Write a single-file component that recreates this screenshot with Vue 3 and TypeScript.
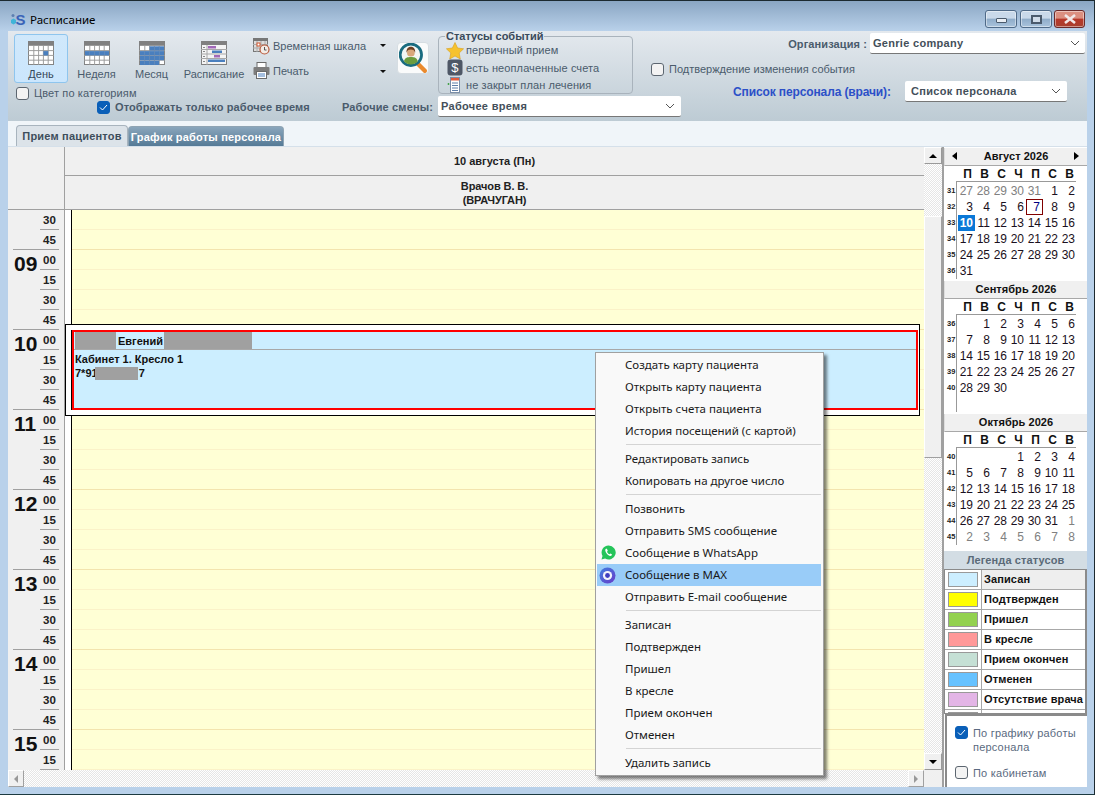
<script setup lang="ts">
interface Day { t: string; muted?: boolean; today?: boolean; picked?: boolean }
interface Week { num: number; days: Day[] }
interface Month { title: string; nav: boolean; weeks: Week[] }

function makeMonth(title: string, nav: boolean, firstWeek: number, lead: (number | null)[], count: number, trail: number): Month {
  const cells: Day[] = []
  lead.forEach((v) => cells.push({ t: v === null ? '' : String(v), muted: v !== null }))
  for (let d = 1; d <= count; d++) {
    const isAug = title.startsWith('Август')
    cells.push({ t: String(d), today: isAug && d === 10, picked: isAug && d === 7 })
  }
  for (let d = 1; d <= trail; d++) cells.push({ t: String(d), muted: true })
  const weeks: Week[] = []
  for (let i = 0; i < cells.length; i += 7) {
    weeks.push({ num: firstWeek + weeks.length, days: cells.slice(i, i + 7) })
  }
  return { title, nav, weeks }
}

const months: Month[] = [
  makeMonth('Август 2026', true, 31, [27, 28, 29, 30, 31], 31, 0),
  makeMonth('Сентябрь 2026', false, 36, [null], 30, 0),
  makeMonth('Октябрь 2026', false, 40, [null, null, null], 31, 8),
]
const dow = ['П', 'В', 'С', 'Ч', 'П', 'С', 'В']

const hourGroups = [
  { h: '', m: ['30', '45'], open: false },
  ...['09', '10', '11', '12', '13', '14'].map((h) => ({ h, m: ['00', '15', '30', '45'], open: false })),
  { h: '15', m: ['00', '15'], open: true },
]
const slots = Array.from({ length: 28 }, (_, i) => i)

const legend = [
  { t: 'Записан', c: 'c-a', first: true },
  { t: 'Подтвержден', c: 'c-b' },
  { t: 'Пришел', c: 'c-c' },
  { t: 'В кресле', c: 'c-d' },
  { t: 'Прием окончен', c: 'c-e' },
  { t: 'Отменен', c: 'c-f' },
  { t: 'Отсутствие врача', c: 'c-g' },
  { t: '', c: 'c-h' },
]

const menu: string[][] = [
  ['Создать карту пациента', 'Открыть карту пациента', 'Открыть счета пациента', 'История посещений (с картой)'],
  ['Редактировать запись', 'Копировать на другое число'],
  ['Позвонить', 'Отправить SMS сообщение', 'Сообщение в WhatsApp', 'Сообщение в MAX', 'Отправить E-mail сообщение'],
  ['Записан', 'Подтвержден', 'Пришел', 'В кресле', 'Прием окончен', 'Отменен'],
  ['Удалить запись'],
]

const colX = [1, 6, 11, 16, 21, 26]
const rowY = [5, 10, 15, 20, 25]
const views = [
  { label: 'День', blue: [[3, 1]] as number[][], active: true },
  { label: 'Неделя', blue: [[0, 1], [1, 1], [2, 1], [3, 1], [4, 1]] as number[][], active: false },
  {
    label: 'Месяц',
    blue: [[2, 0], [3, 0], [4, 0], [0, 1], [1, 1], [2, 1], [3, 1], [4, 1], [0, 2], [1, 2], [2, 2], [3, 2], [4, 2], [0, 3], [1, 3], [2, 3], [3, 3]] as number[][],
    active: false,
  },
]
</script>

<template>
  <div class="win">
    <header class="title">
      <svg class="logo" width="17" height="14" viewBox="0 0 17 14">
        <path d="M1 8l2.500-1.500 2.500 1.500v3l-2.500 1.500-2.500-1.500z" fill="#3fb4d8" />
        <circle cx="3" cy="3.500" r="1.500" fill="#5d7fb0" />
        <text x="5.500" y="12.500" class="logo-s">S</text>
      </svg>
      <span class="title-text">Расписание</span>
      <div class="ctrls">
        <span class="ctrl ctrl-min"><i></i></span>
        <span class="ctrl ctrl-max"><i></i></span>
        <span class="ctrl ctrl-close">
          <svg width="14" height="10" viewBox="0 0 14 10"><path d="M2 1l10 8M12 1L2 9" stroke="#f1e8e8" stroke-width="2.600" /></svg>
        </span>
      </div>
    </header>

    <section class="toolbar">
      <div class="tb-left">
        <div class="tb-row1">
          <button v-for="v in views" :key="v.label" class="vbtn" :class="{ active: v.active }">
            <svg width="26" height="24" viewBox="0 0 27 25">
              <rect x="0.500" y="0.500" width="26" height="24" fill="#fff" stroke="#808080" />
              <rect width="27" height="5" fill="#808080" />
              <path d="M6 5v20M11 5v20M16 5v20M21 5v20M0 10h27M0 15h27M0 20h27" stroke="#9a9a9a" stroke-width="1" />
              <rect v-for="(b, i) in v.blue" :key="i" :x="colX[b[0]]" :y="rowY[b[1]] + 0.500" width="5" height="4.500" fill="#4a7fbe" />
            </svg>
            <span>{{ v.label }}</span>
          </button>
          <button class="vbtn vbtn-wide">
            <svg width="26" height="24" viewBox="0 0 26 24">
              <rect x="0.500" y="0.500" width="25" height="23" fill="#f4f4f4" stroke="#808080" />
              <rect width="26" height="4" fill="#808080" />
              <path d="M6 4v20M0 8.500h26M0 13h26M0 17.500h26" stroke="#a8a8a8" />
              <rect x="2" y="6" width="2" height="1" fill="#888" /><rect x="2" y="10" width="2" height="1" fill="#888" />
              <rect x="2" y="15" width="2" height="1" fill="#888" /><rect x="2" y="20" width="2" height="1" fill="#888" />
              <rect x="7" y="5" width="8" height="2.500" fill="#a268b8" />
              <rect x="11" y="9.500" width="10" height="2.500" fill="#4a7fbe" />
              <rect x="13" y="14" width="6" height="2.500" fill="#a268b8" />
              <rect x="7" y="18.500" width="17" height="2.500" fill="#4a7fbe" />
            </svg>
            <span>Расписание</span>
          </button>
          <div class="tools">
            <div class="tool">
              <svg width="17" height="17" viewBox="0 0 17 17">
                <rect x="0.500" y="0.500" width="14" height="13" fill="#ddd" stroke="#777" />
                <rect width="15" height="3" fill="#777" />
                <path d="M4 3v11M8 3v11M12 3v11M0 6.500h15M0 10h15" stroke="#aaa" />
                <rect x="4" y="5" width="3" height="3" fill="#fff" stroke="#d0562f" />
                <circle cx="11.500" cy="11.500" r="4.500" fill="#f3ece6" stroke="#b9583a" stroke-width="1.200" />
                <path d="M11.500 9v3h2" stroke="#555" fill="none" />
              </svg>
              <span class="tool-text">Временная шкала</span>
              <i class="tri"></i>
            </div>
            <div class="tool tool2">
              <svg width="17" height="17" viewBox="0 0 17 17">
                <rect x="4" y="0.500" width="9" height="5" fill="#fff" stroke="#6a6a6a" />
                <rect x="0.500" y="5" width="16" height="8" rx="1" fill="#7d7d7d" />
                <rect x="3.500" y="9.500" width="10" height="7" fill="#fff" stroke="#6a6a6a" />
                <path d="M5 12h7M5 14h7" stroke="#4a7fbe" />
              </svg>
              <span class="tool-text">Печать</span>
              <i class="tri tri2"></i>
            </div>
          </div>
          <div class="search">
            <svg width="28" height="30" viewBox="0 0 26 28">
              <path d="M17 19l7 7" stroke="#ea8a2d" stroke-width="4" stroke-linecap="round" />
              <circle cx="11" cy="11" r="10" fill="#f3f7f5" stroke="#1a6c80" stroke-width="2.600" />
              <path d="M4.500 17c1-3.500 3.500-4 6.500-4s5.500.5 6.500 4c-2 2-4 3-6.500 3s-4.500-1-6.500-3z" fill="#6b9c3d" />
              <circle cx="11" cy="9" r="3.600" fill="#d9a87c" />
              <path d="M7 9c-.5-4 2-5.500 4-5.500s4.500 1.500 4 5.500c-1-2.500-2-3-4-3s-3 .5-4 3z" fill="#6e3f22" />
            </svg>
          </div>
        </div>
        <div class="tb-row2">
          <span class="cb"></span>
          <span class="lab">Цвет по категориям</span>
        </div>
        <div class="tb-row3">
          <span class="cb on"><svg width="9" height="7" viewBox="0 0 9 7"><path d="M1 3.500l2.500 2.500L8 1" stroke="#fff" fill="none" /></svg></span>
          <span class="lab-b only">Отображать только рабочее время</span>
          <span class="lab-b shifts">Рабочие смены:</span>
        </div>
      </div>

      <div class="tb-mid">
        <fieldset class="statuses">
          <legend>Статусы событий</legend>
          <div class="st-row">
            <svg width="18" height="17" viewBox="0 0 18 17"><path d="M9 .5l2.600 5.500 6 .8-4.400 4.200 1.100 6L9 14l-5.300 3 1.100-6L.4 6.800l6-.8z" fill="#f6c22f" stroke="#d8a01c" stroke-width=".6" /></svg>
            <span>первичный прием</span>
          </div>
          <div class="st-row">
            <svg width="16" height="17" viewBox="0 0 16 17">
              <rect x=".5" y=".5" width="15" height="16" rx="3" fill="#4e5766" />
              <text x="8" y="13" class="dollar">$</text>
            </svg>
            <span>есть неоплаченные счета</span>
          </div>
          <div class="st-row">
            <svg width="16" height="16" viewBox="0 0 16 16">
              <rect x="3.500" y=".5" width="9" height="15" fill="#fff" stroke="#7a8ea8" />
              <rect x="4" y="1" width="8" height="2.500" fill="#e15a3b" />
              <path d="M5 6h6M5 8.500h6M5 11h6M5 13.500h6" stroke="#5e7ea8" />
              <path d="M1.500 6v2M.5 7h2" stroke="#46a24a" />
            </svg>
            <span>не закрыт план лечения</span>
          </div>
        </fieldset>
        <div class="sel sel-shift"><span>Рабочее время</span><svg class="chev" width="10" height="6" viewBox="0 0 10 6"><path d="M1 1l4 4 4-4" fill="none" stroke="#555" /></svg></div>
      </div>

      <div class="tb-right">
        <div class="org-row">
          <span class="lab-b">Организация :</span>
          <div class="sel sel-org"><span>Genrie company</span><svg class="chev" width="10" height="6" viewBox="0 0 10 6"><path d="M1 1l4 4 4-4" fill="none" stroke="#555" /></svg></div>
        </div>
        <div class="confirm-row">
          <span class="cb"></span>
          <span class="lab lab-tight">Подтверждение изменения события</span>
        </div>
        <div class="staff-row">
          <span class="staff-lab">Список персонала (врачи):</span>
          <div class="sel sel-staff"><span>Список персонала</span><svg class="chev" width="10" height="6" viewBox="0 0 10 6"><path d="M1 1l4 4 4-4" fill="none" stroke="#555" /></svg></div>
        </div>
      </div>
    </section>

    <nav class="tabs">
      <span class="tab tab-on">Прием пациентов</span>
      <span class="tab tab-off">График работы персонала</span>
    </nav>

    <main class="body">
      <div class="main">
        <div class="main-top">
          <div class="cal">
            <div class="cal-head">
              <div class="gut-head"></div>
              <div class="head-cols">
                <div class="head-date">10 августа (Пн)</div>
                <div class="head-doc">Врачов В. В.<br />(ВРАЧУГАН)</div>
              </div>
            </div>
            <div class="cal-body">
              <div class="gutter">
                <div v-for="g in hourGroups" :key="g.h + g.m[0]" class="hgroup" :class="{ open: g.open }">
                  <div class="hnum">{{ g.h }}</div>
                  <div class="mins">
                    <div v-for="m in g.m" :key="m" class="min">{{ m }}</div>
                  </div>
                </div>
              </div>
              <div class="strip"></div>
              <div class="slots">
                <div v-for="s in slots" :key="s" class="slot" :class="{ hour: s % 4 === 1 }"></div>
              </div>
              <div class="event-wrap">
                <div class="event">
                  <div class="ev-head">
                    <span class="red r1"></span>
                    <b>Евгений</b>
                    <span class="red r2"></span>
                  </div>
                  <div class="ev-body">
                    <div>Кабинет 1. Кресло 1</div>
                    <div class="phone">7*91<span class="red r3"></span>7</div>
                  </div>
                </div>
              </div>
            </div>
          </div>
          <div class="vscroll">
            <span class="sbtn"><i class="up"></i></span>
            <span class="vtrack t1"></span>
            <span class="vthumb"></span>
            <span class="vtrack t2"></span>
            <span class="sbtn"><i class="down"></i></span>
          </div>
        </div>
        <div class="hscroll">
          <span class="hbtn"><i class="left"></i></span>
          <span class="htrack"></span>
          <span class="hbtn"><i class="right"></i></span>
          <span class="corner"></span>
        </div>
      </div>

      <aside class="side">
        <div v-for="mo in months" :key="mo.title" class="month">
          <div class="mo-head">
            <i v-if="mo.nav" class="mo-l"></i>
            <span>{{ mo.title }}</span>
            <i v-if="mo.nav" class="mo-r"></i>
          </div>
          <div class="mo-dow">
            <span v-for="(d, i) in dow" :key="i">{{ d }}</span>
          </div>
          <div class="mo-grid">
            <div v-for="w in mo.weeks" :key="w.num" class="wk">
              <span class="wk-n">{{ w.num }}</span>
              <span
                v-for="(d, i) in w.days"
                :key="i"
                class="dc"
                :class="{ muted: d.muted, today: d.today, picked: d.picked }"
              >{{ d.t }}</span>
            </div>
          </div>
        </div>
        <div class="legend">
          <div class="leg-head">Легенда статусов</div>
          <div class="leg-table">
            <div v-for="l in legend" :key="l.c" class="leg-row">
              <span class="leg-sw"><i :class="l.c"></i></span>
              <span class="leg-t" :class="{ first: l.first }">{{ l.t }}</span>
            </div>
          </div>
        </div>
        <div class="filters">
          <div class="f-row">
            <span class="cb on"><svg width="9" height="7" viewBox="0 0 9 7"><path d="M1 3.500l2.500 2.500L8 1" stroke="#fff" fill="none" /></svg></span>
            <span class="f-lab">По графику работы персонала</span>
          </div>
          <div class="f-row f2">
            <span class="cb"></span>
            <span class="f-lab">По кабинетам</span>
          </div>
        </div>
      </aside>
    </main>

    <div class="ctx">
      <template v-for="(grp, gi) in menu" :key="gi">
        <div v-if="gi > 0" class="ctx-sep"></div>
        <div v-for="it in grp" :key="it" class="ctx-it" :class="{ hot: it === 'Сообщение в MAX' }">
          <svg v-if="it === 'Сообщение в WhatsApp'" class="ctx-ic ic-wa" width="15" height="15" viewBox="0 0 15 15">
            <path d="M7.500.5a7 7 0 0 0-6 10.500L.5 14.500l3.600-1A7 7 0 1 0 7.500.5z" fill="#25c45a" />
            <path d="M5 3.800c-1 .6-1 2 0 3.800s2.500 3 4 3.300c1 .2 2-.5 2-1.400L9.500 8.500l-1 .8C7.500 9 6.300 7.700 6 6.700l.8-.9L5.900 3.800z" fill="#fff" />
          </svg>
          <svg v-if="it === 'Сообщение в MAX'" class="ctx-ic" width="17" height="17" viewBox="0 0 17 17">
            <defs>
              <linearGradient id="mx" x1="0" y1="0" x2="1" y2="1"><stop offset="0" stop-color="#3f7fe0" /><stop offset="1" stop-color="#6a3bc8" /></linearGradient>
            </defs>
            <circle cx="8.500" cy="8.500" r="8" fill="url(#mx)" />
            <circle cx="8.500" cy="8.500" r="4.600" fill="#f4f4fb" />
            <circle cx="8.500" cy="8.500" r="2.400" fill="#3f3cc0" />
          </svg>
          <span>{{ it }}</span>
        </div>
      </template>
    </div>
  </div>
</template>

<style>
html, body { margin: 0; padding: 0; background: #b9d1ea; overflow: hidden; }
</style>

<style scoped>
* { box-sizing: border-box; }
i { display: block; font-style: normal; }
.win {
  position: relative; width: 1095px; height: 795px; display: flex; flex-direction: column;
  background: #b9d1ea; overflow: hidden; font-family: "Liberation Sans", Arial, sans-serif;
  font-size: 11px; border-top: 1px solid #1c2a30; border-right: 1px solid #1c2a30; border-bottom: 1px solid #1c3a40;
  padding: 0 7px 7px 8px;
}
.title {
  flex: none; height: 30px; margin: 0 -7px 0 -8px; padding: 5px 9px 0 10px; display: flex; align-items: center;
  background: linear-gradient(#8aa6c3, #b9d1ea);
}
.logo { margin-top: 1px; }
.logo-s { font: bold 15px "Liberation Sans", sans-serif; fill: #3a63b8; }
.title-text { margin-left: 3px; margin-top: 2px; font: 11.500px "Noto Sans", sans-serif; color: #000; }
.ctrls { margin-left: auto; display: flex; gap: 2px; margin-top: 1px; }
.ctrl {
  height: 18px; width: 32px; border: 1px solid #4f6a88; border-radius: 3px; display: flex; align-items: center; justify-content: center;
  background: linear-gradient(#c9d9ea 0 45%, #8facc9 50%, #a9c3dc);
  box-shadow: inset 0 0 0 1px rgba(255,255,255,.45);
}
.ctrl-max { margin-left: 1px; }
.ctrl-close { width: 31px; background: linear-gradient(#db8f80 0 45%, #b8382a 50%, #a8402f); border-color: #6a2a2a; }
.ctrl-min i { width: 11px; height: 5px; margin-top: 3px; background: #e9eef4; border: 1px solid #4a5a6c; border-radius: 1px; }
.ctrl-max i { width: 11px; height: 9px; background: #cfdbe8; border: 2px solid #4a5a6c; }
.toolbar {
  flex: none; height: 90px; display: flex; background: linear-gradient(#e4e9ee, #bdcbd4);
}
.tb-left { width: 430px; flex: none; padding: 3px 0 0 6px; }
.tb-row1 { display: flex; height: 49px; }
.vbtn {
  width: 55px; height: 49px; padding: 6px 0 0; border: 1px solid transparent; background: none; border-radius: 3px;
  display: flex; flex-direction: column; align-items: center; font: 11px "Liberation Sans", sans-serif; color: #4a5b6c;
}
.vbtn span { margin-top: 3px; white-space: nowrap; }
.vbtn.active { width: 54px; margin-right: 1px; background: linear-gradient(#d0e8fb, #cbe6fd); border-color: #8ec5ee; color: #37485a; }
.vbtn-wide { width: 64px; margin-left: 3px; }
.tools { width: 133px; margin-left: 7px; flex: none; }
.tool { display: flex; align-items: center; height: 24px; position: relative; }
.tool2 { height: 25px; }
.tool-text { margin-left: 3px; color: #4a5b6c; white-space: nowrap; }
.tri { position: absolute; right: 0; top: 10px; width: 0; height: 0; border: 3px solid transparent; border-top: 3px solid #111; border-bottom: 0; }
.tri2 { top: 12px; }
.search {
  width: 32px; height: 32px; margin: 8px 0 0 11px; background: #fafbfb; border: 1px solid #d6dde2; border-radius: 4px;
  display: flex; align-items: center; justify-content: center; flex: none;
}
.tb-row2 { display: flex; align-items: center; height: 14px; margin-top: 3px; padding-left: 2px; }
.tb-row3 { display: flex; align-items: center; height: 14px; padding-left: 83px; }
.cb { width: 13px; height: 13px; flex: none; border: 1px solid #5c6670; border-radius: 3px; background: #f3f3f3; display: flex; align-items: center; justify-content: center; }
.cb.on { background: #0a5fb8; border-color: #0a5fb8; }
.lab { margin-left: 5px; color: #4a5b6c; white-space: nowrap; letter-spacing: .12px; }
.lab-tight { letter-spacing: 0; }
.lab-b { font-weight: bold; color: #4a5b6c; white-space: nowrap; letter-spacing: .1px; }
.only { margin-left: 5px; width: 195px; flex: none; }
.shifts { margin-left: 32px; letter-spacing: .15px; }
.tb-mid { width: 205px; flex: none; }
.statuses { margin: -2px 0 0; padding: 0; width: 195px; height: 65px; border: 1px solid #a9b3bc; border-radius: 4px; }
.statuses legend { margin-left: 6px; margin-bottom: -1.500px; padding: 0 1px; font: bold 11px "Liberation Sans", sans-serif; color: #3a4a5a; line-height: 14px; }
.st-row { height: 17.500px; display: flex; align-items: center; padding-left: 7px; color: #4a5b6c; white-space: nowrap; letter-spacing: .1px; }
.st-row svg { flex: none; width: 18px; }
.st-row span { margin-left: 2px; }
.dollar { font: 13px "Liberation Sans", sans-serif; fill: #fff; text-anchor: middle; }
.sel {
  display: flex; align-items: center; justify-content: space-between; background: #fff; border-bottom: 1px solid #777; border-radius: 2px;
  font-weight: bold; color: #444f5a; letter-spacing: .3px; flex: none; white-space: nowrap;
}
.sel-shift { width: 243px; height: 21px; margin-top: 2px; padding: 0 6px 0 3px; }
.sel-org { width: 215px; height: 21px; padding: 0 5px 0 3px; margin-left: 3px; }
.sel-staff { width: 162px; height: 21px; padding: 0 6px; margin-left: 15px; }
.tb-right { flex: 1; min-width: 0; padding-top: 2px; }
.org-row { display: flex; align-items: center; justify-content: flex-end; height: 21px; margin-right: 2px; }
.confirm-row { display: flex; align-items: center; height: 14px; margin-top: 8px; padding-left: 8px; }
.staff-row { display: flex; align-items: center; height: 21px; margin-top: 5px; padding-left: 90px; }
.staff-lab { width: 157px; flex: none; font: bold 12px "Liberation Sans", sans-serif; letter-spacing: -.12px; color: #2c50c8; white-space: nowrap; }
.tabs { flex: none; height: 26px; padding: 4px 0 0 8px; background: #f0f5f9; display: flex; align-items: flex-end; border-bottom: 1px solid #d5e0ea; }
.tab { height: 21px; font-weight: bold; letter-spacing: .2px; display: flex; align-items: center; border-radius: 4px 4px 0 0; white-space: nowrap; justify-content: center; }
.tab-on { width: 112px; background: #dce3e9; color: #3e4e5c; border: 1px solid #a8b4be; border-bottom: 0; }
.tab-off { width: 156px; height: 20px; background: linear-gradient(#8aa6bc, #557a96); color: #fff; border: 1px solid #8fa4b4; border-bottom: 0; }
.body { flex: 1; min-height: 0; display: flex; background: #fff; }
.main { width: 936px; flex: none; display: flex; flex-direction: column; border-right: 2px solid #a0a0a0; }
.main-top { flex: 1; min-height: 0; display: flex; }
.cal { width: 916px; flex: none; display: flex; flex-direction: column; position: relative; }
.cal-head { flex: none; height: 63px; display: flex; background: #f0f0f0; }
.gut-head { width: 57px; flex: none; border-right: 1px solid #a0a0a0; border-bottom: 1px solid #a0a0a0; }
.head-cols { flex: 1; font-weight: bold; color: #222; text-align: center; }
.head-date { height: 29px; line-height: 28px; border-bottom: 1px solid #a0a0a0; }
.head-doc { height: 34px; padding-top: 3px; line-height: 14px; letter-spacing: -.1px; border-bottom: 1px solid #a0a0a0; }
.cal-body { flex: 1; min-height: 0; display: flex; position: relative; overflow: hidden; }
.gutter { width: 57px; flex: none; background: #f0f0f0; border-right: 1px solid #a0a0a0; }
.hgroup { display: flex; position: relative; margin-left: 5px; width: 46px; border-bottom: 1px solid #a0a0a0; }
.hgroup.open { border-bottom: 0; }
.hnum { width: 27px; flex: none; font: bold 21px/26px "Liberation Sans", sans-serif; color: #111; padding: 1px 0 0 1px; white-space: nowrap; }
.mins { flex: 1; }
.min { height: 20px; font: bold 11.500px/20px "Liberation Sans", sans-serif; color: #222; text-align: center; border-bottom: 1px solid #a0a0a0; }
.min:last-child { border-bottom: 0; height: 19px; }
.hgroup.open .min:last-child { border-bottom: 1px solid #a0a0a0; height: 20px; }
.strip { width: 7px; flex: none; background: #fff; border-right: 1px solid #000; }
.slots { flex: 1; background: #ffffd5; }
.slot { height: 20px; border-bottom: 1px solid #fbf2c8; }
.slot.hour { border-bottom-color: #f3e4ae; }
.event-wrap {
  position: absolute; left: 57px; top: 114px; width: 855px; height: 92px; background: #fff; border: 1px solid #000; padding: 5px 0 5px 6px;
}
.event { width: 846px; height: 80px; border: 2px solid #f00; background: #cceeff; box-shadow: -1px 0 0 #000; color: #111; font-weight: bold; }
.ev-head { height: 18px; border-bottom: 1px solid #a8a8a8; display: flex; align-items: center; padding-left: 1px; }
.ev-head b { margin: 0 1px 0 2px; }
.red { display: inline-block; background: #a0a0a0; }
.r1 { width: 41px; height: 17px; }
.r2 { width: 88px; height: 17px; }
.r3 { width: 43px; height: 13px; vertical-align: -3px; margin-left: -3px; margin-right: 1px; }
.ev-body { padding: 2px 0 0 1px; line-height: 14px; }
.vscroll { width: 18px; flex: none; display: flex; flex-direction: column; background: #fff; }
.sbtn { height: 17px; flex: none; background: #f0f0f0; border: 1px solid; border-color: #fff #999 #999 #fff; display: flex; align-items: center; justify-content: center; }
.up { width: 0; height: 0; border: 4px solid transparent; border-bottom: 4px solid #000; border-top: 0; }
.down { width: 0; height: 0; border: 4px solid transparent; border-top: 4px solid #000; border-bottom: 0; }
.vtrack, .htrack { background: repeating-conic-gradient(#e6e6e6 0 25%, #fff 0 50%) 0 0 / 2px 2px; }
.t1 { height: 52px; flex: none; }
.t2 { flex: 1; }
.vthumb { height: 242px; flex: none; background: #f0f0f0; border: 1px solid; border-color: #fff #a0a0a0 #a0a0a0 #fff; }
.hscroll { flex: none; height: 17px; display: flex; }
.hbtn { width: 16px; flex: none; background: #f0f0f0; border: 1px solid; border-color: #fff #a0a0a0 #a0a0a0 #fff; display: flex; align-items: center; justify-content: center; }
.left { width: 0; height: 0; border: 4px solid transparent; border-right: 4px solid #999; border-left: 0; }
.right { width: 0; height: 0; border: 4px solid transparent; border-left: 4px solid #999; border-right: 0; }
.htrack { flex: 1; }
.corner { width: 18px; flex: none; background: #f0f0f0; }
.side { width: 143px; flex: none; display: flex; flex-direction: column; background: #fff; padding-top: 1px; min-height: 0; }
.month { height: 133px; flex: none; }
.mo-head { height: 18px; padding-bottom: 2px; background: #f0f0f0; border-bottom: 1px solid #a8a8a8; border-left: 1px solid #ddd; font-weight: bold; font-size: 11px; letter-spacing: .05px; color: #111; display: flex; align-items: center; justify-content: center; position: relative; }
.mo-l, .mo-r { position: absolute; top: 4px; width: 0; height: 0; border: 4px solid transparent; }
.mo-l { left: 7px; border-right: 5px solid #000; border-left: 0; }
.mo-r { right: 8px; border-left: 5px solid #000; border-right: 0; }
.mo-dow { height: 15px; padding: 1px 0 0 15px; display: flex; font-weight: bold; font-size: 12px; line-height: 14px; color: #111; }
.mo-dow span { width: 17px; text-align: center; }
.mo-grid { height: 98px; margin-left: 0; padding-top: 2px; background: linear-gradient(#999, #999) 12px 0 / 120px 1px no-repeat, linear-gradient(#999, #999) 12px 0 / 1px 100% no-repeat; }
.wk { height: 16px; display: flex; align-items: center; padding-left: 14px; position: relative; font-size: 12px; }
.wk-n { position: absolute; left: 3px; top: 3px; font: bold 7.500px/10px "Liberation Sans", sans-serif; color: #222; }
.dc { width: 17px; height: 16px; text-align: right; padding-right: 2px; line-height: 16px; color: #1a1020; flex: none; }
.dc.muted { color: #808080; }
.dc.today { background: #0a78d7; color: #fff; font-weight: bold; }
.dc.picked { border: 1px solid #800000; color: #000080; line-height: 14px; padding-right: 2px; }
.legend { flex: 1; min-height: 0; margin-top: 4px; overflow: hidden; display: flex; flex-direction: column; }
.leg-head { flex: none; height: 18px; background: #d3dde4; color: #5a6a78; font: bold 11px/18px "Liberation Sans", sans-serif; letter-spacing: .1px; text-align: center; }
.leg-table { flex: 1; min-height: 0; overflow: hidden; border: 1px solid #8a8a8a; border-right-width: 2px; }
.leg-row { height: 20px; display: flex; border-bottom: 1px solid #a8a8a8; }
.leg-sw { width: 37px; flex: none; border-right: 1px solid #a8a8a8; padding: 2px 3px; }
.leg-sw i { height: 15px; border: 1px solid #999; }
.leg-t { flex: 1; font: bold 11px/19px "Liberation Sans", sans-serif; color: #111; padding-left: 2px; letter-spacing: .1px; white-space: nowrap; }
.leg-t.first { background: #eee; }
.c-a { background: #cceeff; } .c-b { background: #ffff00; } .c-c { background: #93d14f; } .c-d { background: #ff9999; }
.c-e { background: #c5e0d5; } .c-f { background: #66c2ff; } .c-g { background: #e3b5e6; } .c-h { background: #eee; }
.filters { flex: none; height: 73px; margin-left: 1px; background: #fff; border: 2px solid #8a8a8a; border-width: 2px 0 0 2px; padding: 10px 0 0 8px; color: #5a6a80; }
.f-row { display: flex; align-items: flex-start; }
.f-lab { margin-left: 5px; width: 104px; line-height: 14px; letter-spacing: .2px; }
.f2 { margin-top: 12px; }
.ctx {
  position: absolute; left: 595px; top: 351px; width: 229px; height: 424px; background: #f9f9f9; border: 1px solid #a0a0a0;
  padding: 1px 1px 0; box-shadow: 3px 3px 3px rgba(0,0,0,.5); font: 11.500px "Noto Sans", sans-serif; color: #1a1a1a;
}
.ctx-it { height: 22px; display: flex; align-items: center; padding: 0 0 2px 28px; position: relative; white-space: nowrap; margin-right: 1px; }
.ctx-it.hot { background: #99ccf8; }
.ctx-ic { position: absolute; left: 2px; top: 3px; }
.ic-wa { left: 4px; }
.ctx-sep { height: 6px; margin-left: 29px; margin-right: 1px; padding-top: 2px; }
.ctx-sep::before { content: ""; display: block; height: 1px; background: #d4d4d4; }
</style>
